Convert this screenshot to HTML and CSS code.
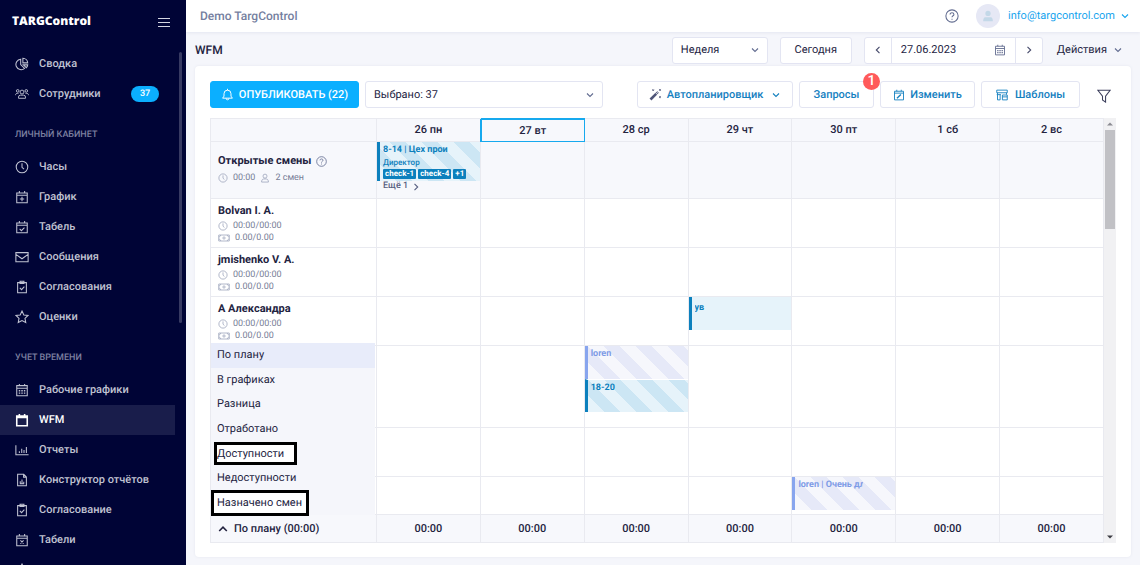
FILE: index.html
```html
<!DOCTYPE html>
<html lang="ru">
<head>
<meta charset="utf-8">
<title>TARGControl – WFM</title>
<link rel="stylesheet" href="styles.css">
</head>
<body>
<svg class="sprite" aria-hidden="true">
  <symbol id="i-pie" viewBox="0 0 16 16"><path d="M6.500 2.500a6 6 0 1 0 4.500 10.500L6.500 8.700z"/><path d="M9 1.500v5.200h5.500A5.600 5.600 0 0 0 9 1.500zM9.500 9h5a5 5 0 0 1-1.500 3.200z"/></symbol>
  <symbol id="i-team" viewBox="0 0 18 16"><circle cx="9" cy="5.500" r="2.500"/><circle cx="3.500" cy="4" r="1.700"/><circle cx="14.500" cy="4" r="1.700"/><path d="M4.500 13.500v-1.500a2.500 2.500 0 0 1 2.500-2.500h4a2.500 2.500 0 0 1 2.500 2.500v1.500zM.7 9.500c0-1.500.8-2.300 2.300-2.300h1.500M17.300 9.500c0-1.500-.8-2.300-2.300-2.300h-1.500"/></symbol>
  <symbol id="i-clock" viewBox="0 0 16 16"><circle cx="8" cy="8" r="6.600"/><path d="M8 3.800V8.300l2.300 2.200"/></symbol>
  <symbol id="i-cal" viewBox="0 0 16 16"><path d="M2 3.500h12v11H2zM2 5h12M5 1v2.500M11 1v2.500"/></symbol>
  <symbol id="i-calplus" viewBox="0 0 16 16"><path d="M2 3.500h12v11H2zM2 6h12M5 1v2.500M11 1v2.500M8 7.800v5M5.500 10.300h5"/></symbol>
  <symbol id="i-calcheck" viewBox="0 0 16 16"><path d="M2 3.500h12v11H2zM2 6h12M5 1v2.500M11 1v2.500M5.300 10.200l2 2 3.500-3.500"/></symbol>
  <symbol id="i-calx" viewBox="0 0 16 16"><path d="M2 3.500h12v11H2zM2 6h12M5 1v2.500M11 1v2.500M6.200 8.500l3.600 3.600M9.800 8.500l-3.600 3.600"/></symbol>
  <symbol id="i-calgrid" viewBox="0 0 16 16"><path d="M2 3h12v11.500H2zM2 6h12M5 1v2M11 1v2"/><path d="M4.300 8.800h7.500M4.300 11.600h7.500" stroke-width="1.600" stroke-dasharray="1.700 1.200"/></symbol>
  <symbol id="i-mail" viewBox="0 0 16 16"><path d="M1 3h14v10.500H1zM1 5l7 5 7-5"/></symbol>
  <symbol id="i-clip" viewBox="0 0 16 16"><path d="M3 3h10v11.500H3zM5.800 1.500h4.400v2.500H5.800zM5.500 9l2 2 3.200-3.500"/></symbol>
  <symbol id="i-star" viewBox="0 0 16 16"><path d="M8 1.200l2.100 4.400 4.800.6-3.500 3.300.9 4.800L8 12l-4.300 2.300.9-4.800L1.100 6.200l4.800-.6z"/></symbol>
  <symbol id="i-chart" viewBox="0 0 16 16"><path d="M1 2.500v11h14.500M5 11.500V9.500M7.700 11.500V6.500M10.300 11.500V8M13 11.500V4.500"/></symbol>
  <symbol id="i-doc" viewBox="0 0 16 16"><path d="M3 1.500h7l3 3v10H3zM9.800 1.500v3.200H13M6 12V9.500M8 12V7.500M10 12v-2M5.500 12.200h5"/></symbol>
  <symbol id="i-bell" viewBox="0 0 16 16"><path d="M2 12.500h12L12.300 10V7a4.300 4.300 0 0 0-8.600 0v3zM8 2.700V1M6.300 12.800a1.700 1.700 0 0 0 3.400 0"/></symbol>
  <symbol id="i-down" viewBox="0 0 10 10"><path d="M2 3.500L5 6.500l3-3"/></symbol>
  <symbol id="i-up" viewBox="0 0 10 10"><path d="M1.200 7L5 3.200 8.800 7"/></symbol>
  <symbol id="i-left" viewBox="0 0 10 10"><path d="M6.500 1.800L3.300 5l3.200 3.200"/></symbol>
  <symbol id="i-right" viewBox="0 0 10 10"><path d="M3.500 1.800L6.700 5 3.500 8.200"/></symbol>
  <symbol id="i-help" viewBox="0 0 16 16"><circle cx="8" cy="8" r="7"/><path d="M5.800 6.300C5.800 3.600 10.200 3.700 10.200 6.200 10.200 7.700 8 7.700 8 9.500M8 11v1.300"/></symbol>
  <symbol id="i-user" viewBox="0 0 16 16"><circle cx="8" cy="5" r="3.200"/><path d="M2.500 14.500c0-3 1.500-5 3.500-5h4c2 0 3.500 2 3.500 5z"/></symbol>
  <symbol id="i-wand" viewBox="0 0 16 16"><path d="M1.800 14.200l7-7" stroke-width="3.200"/><path d="M8.500 7.500l2.700-2.700" stroke-width="2.600"/><path d="M8.700 7.300l2.200-2.200" stroke="#fff" stroke-width=".9"/><path d="M4 1.500l2.200 2.200M6.200 1.500L4 3.700M12.300 1.200l2.400 2.400M14.700 1.200l-2.400 2.400M12.300 10l2.400 2.400M14.700 10l-2.400 2.400" stroke-width=".9"/></symbol>
  <symbol id="i-edit" viewBox="0 0 16 16"><path d="M2 3h12v11.500H2zM2 5.500h12M5 1v2M11 1v2"/><path d="M5.300 12.200L10.500 7.300" stroke-width="1.800"/></symbol>
  <symbol id="i-layout" viewBox="0 0 16 16"><path d="M1 1.500h14v3.500H1zM2 5v2.500M14 5v2.500M1 7.500h5.500M2 7.500v7h3.500v-7M8.500 8H15v6.500H8.500zM8.500 10.500H15"/></symbol>
  <symbol id="i-filter" viewBox="0 0 16 16"><path d="M1 1.500h14L9.800 8.200V15L6.300 12.600V8.200z"/></symbol>
  <symbol id="i-cash" viewBox="0 0 16 10"><path d="M1 1h14v8H1zM3.500 1c0 1.500-1 2.500-2.500 2.500M12.500 1c0 1.500 1 2.500 2.500 2.500M3.500 9c0-1.500-1-2.500-2.500-2.500M12.500 9c0-1.500 1-2.500 2.500-2.500"/><circle cx="8" cy="5" r="1.500"/></symbol>
</svg>

<aside class="sidebar">
  <header class="brand">
    <span class="brand-name">TARGControl</span>
    <button class="burger" aria-label="Меню"><i></i><i></i><i></i></button>
  </header>
  <nav class="nav">
    <a href="#"><svg class="icon"><use href="#i-pie"/></svg>Сводка</a>
    <a href="#"><svg class="icon"><use href="#i-team"/></svg>Сотрудники<span class="count">37</span></a>
    <h2>Личный кабинет</h2>
    <a href="#"><svg class="icon"><use href="#i-clock"/></svg>Часы</a>
    <a href="#"><svg class="icon"><use href="#i-calplus"/></svg>График</a>
    <a href="#"><svg class="icon"><use href="#i-calcheck"/></svg>Табель</a>
    <a href="#"><svg class="icon"><use href="#i-mail"/></svg>Сообщения</a>
    <a href="#"><svg class="icon"><use href="#i-clip"/></svg>Согласования</a>
    <a href="#"><svg class="icon"><use href="#i-star"/></svg>Оценки</a>
    <h2>Учет времени</h2>
    <a href="#"><svg class="icon"><use href="#i-calgrid"/></svg>Рабочие графики</a>
    <a href="#" class="active"><svg class="icon"><use href="#i-cal"/></svg>WFM</a>
    <a href="#"><svg class="icon"><use href="#i-chart"/></svg>Отчеты</a>
    <a href="#"><svg class="icon"><use href="#i-doc"/></svg>Конструктор отчётов</a>
    <a href="#"><svg class="icon"><use href="#i-clip"/></svg>Согласование</a>
    <a href="#"><svg class="icon"><use href="#i-calx"/></svg>Табели</a>
    <a href="#"><svg class="icon"><use href="#i-star"/></svg>Отпуска</a>
  </nav>
  <div class="side-thumb"></div>
</aside>

<div class="page">
  <header class="topbar">
    <span class="company">Demo TargControl</span>
    <button class="plain help" aria-label="Справка"><svg class="icon"><use href="#i-help"/></svg></button>
    <span class="avatar"><svg viewBox="0 0 16 16"><circle cx="8" cy="5" r="3"/><path d="M2.500 14c0-4 1.500-4.500 3-4.500h5c1.500 0 3 .5 3 4.500z"/></svg></span>
    <a class="account" href="#">info@targcontrol.com<svg class="chev"><use href="#i-down"/></svg></a>
  </header>

  <div class="subbar">
    <h1>WFM</h1>
    <div class="select period">
      <select aria-label="Период"><option>Неделя</option></select>
      <svg class="chev"><use href="#i-down"/></svg>
    </div>
    <button class="btn today">Сегодня</button>
    <div class="date-nav">
      <button aria-label="Назад"><svg class="chev"><use href="#i-left"/></svg></button>
      <label class="date"><input type="text" value="27.06.2023" aria-label="Дата"><svg class="icon"><use href="#i-calgrid"/></svg></label>
      <button aria-label="Вперёд"><svg class="chev"><use href="#i-right"/></svg></button>
    </div>
    <button class="plain actions">Действия<svg class="chev"><use href="#i-down"/></svg></button>
  </div>

  <main class="card">
    <div class="toolbar">
      <button class="btn publish"><svg class="icon"><use href="#i-bell"/></svg>ОПУБЛИКОВАТЬ (22)</button>
      <div class="select people">
        <select aria-label="Сотрудники"><option>Выбрано: 37</option></select>
        <svg class="chev"><use href="#i-down"/></svg>
      </div>
      <div class="tools">
        <button class="btn link auto"><svg class="icon dark"><use href="#i-wand"/></svg>Автопланировщик<svg class="chev"><use href="#i-down"/></svg></button>
        <button class="btn link requests">Запросы<span class="alert">1</span></button>
        <button class="btn link edit"><svg class="icon"><use href="#i-edit"/></svg>Изменить</button>
        <button class="btn link templates"><svg class="icon"><use href="#i-layout"/></svg>Шаблоны</button>
      </div>
      <button class="plain filter" aria-label="Фильтр"><svg class="icon"><use href="#i-filter"/></svg></button>
    </div>

    <div class="schedule">
      <table class="grid">
        <colgroup><col class="col-name"><col span="7"></colgroup>
        <thead>
          <tr><th></th><th>26 пн</th><th class="now">27 вт</th><th>28 ср</th><th>29 чт</th><th>30 пт</th><th>1 сб</th><th>2 вс</th></tr>
        </thead>
        <tbody>
          <tr class="open">
            <th>
              <div class="title">Открытые смены<svg class="icon"><use href="#i-help"/></svg></div>
              <div class="meta"><svg class="mini"><use href="#i-clock"/></svg>00:00<svg class="mini person"><use href="#i-user"/></svg>2 смен</div>
            </th>
            <td>
              <div class="shift plan tall">
                <b>8-14 | Цех прои</b>
                <small>Директор</small>
                <div class="tags"><span>check-1</span><span>check-4</span><span>+1</span></div>
              </div>
              <a class="more" href="#">Ещё 1<svg class="chev"><use href="#i-right"/></svg></a>
            </td>
            <td></td><td></td><td></td><td></td><td></td><td></td>
          </tr>
          <tr class="person-row">
            <th><div class="name">Bolvan I. A.</div><div class="meta"><svg class="mini"><use href="#i-clock"/></svg>00:00/00:00</div><div class="meta"><svg class="cash"><use href="#i-cash"/></svg>0.00/0.00</div></th>
            <td></td><td></td><td></td><td></td><td></td><td></td><td></td>
          </tr>
          <tr class="person-row">
            <th><div class="name">jmishenko V. A.</div><div class="meta"><svg class="mini"><use href="#i-clock"/></svg>00:00/00:00</div><div class="meta"><svg class="cash"><use href="#i-cash"/></svg>0.00/0.00</div></th>
            <td></td><td></td><td></td><td></td><td></td><td></td><td></td>
          </tr>
          <tr class="person-row">
            <th><div class="name">А Александра</div><div class="meta"><svg class="mini"><use href="#i-clock"/></svg>00:00/00:00</div><div class="meta"><svg class="cash"><use href="#i-cash"/></svg>0.00/0.00</div></th>
            <td></td><td></td><td></td>
            <td><div class="shift solid"><b>ув</b></div></td>
            <td></td><td></td><td></td>
          </tr>
          <tr class="double">
            <th></th><td></td><td></td>
            <td><div class="shift absent"><b>loren</b></div><div class="shift plan"><b>18-20</b></div></td>
            <td></td><td></td><td></td><td></td>
          </tr>
          <tr class="person-row"><th></th><td></td><td></td><td></td><td></td><td></td><td></td><td></td></tr>
          <tr class="last">
            <th></th><td></td><td></td><td></td><td></td>
            <td><div class="shift absent"><b>loren | Очень дл</b></div></td>
            <td></td><td></td>
          </tr>
        </tbody>
        <tfoot>
          <tr><th><button class="plain total"><svg class="chev"><use href="#i-up"/></svg>По плану (00:00)</button></th><td>00:00</td><td>00:00</td><td>00:00</td><td>00:00</td><td>00:00</td><td>00:00</td><td>00:00</td></tr>
        </tfoot>
      </table>
      <ul class="menu">
        <li class="chosen">По плану</li>
        <li>В графиках</li>
        <li>Разница</li>
        <li>Отработано</li>
        <li><span class="marked">Доступности</span></li>
        <li>Недоступности</li>
        <li><span class="marked wide">Назначено смен</span></li>
      </ul>
      <div class="scroll">
        <svg viewBox="0 0 12 12"><path d="M3 7.500h6L6 4.500z"/></svg>
        <div class="thumb"></div>
        <svg class="end" viewBox="0 0 12 12"><path d="M3 4.500h6L6 7.500z"/></svg>
      </div>
    </div>
  </main>
</div>
</body>
</html>
```

FILE: styles.css
```css
* { box-sizing: border-box; }

body {
  margin: 0;
  height: 100vh;
  display: flex;
  overflow: hidden;
  background: #f5f6fb;
  color: #23233f;
  font: 500 11px/16px Roboto, "Noto Sans", sans-serif;
  text-rendering: geometricPrecision;
}

button, input, select { font: inherit; color: inherit; margin: 0; text-rendering: inherit; }
button { cursor: pointer; }
a { text-decoration: none; color: inherit; }
h1, h2, ul { margin: 0; padding: 0; }

.sprite { position: absolute; width: 0; height: 0; }
.icon, .chev, .mini, .cash { fill: none; stroke: currentColor; stroke-width: 1.200; flex: none; }
.icon { width: 14px; height: 14px; }
.chev { width: 10px; height: 10px; stroke-width: 1.100; }
.mini { width: 10px; height: 10px; }
.cash { width: 12px; height: 8px; stroke-width: 1; }

/* Sidebar */
.sidebar {
  position: relative;
  flex: none;
  width: 186px;
  background: #000436;
  color: #c0c3d2;
  overflow: hidden;
}
.brand {
  display: flex;
  justify-content: space-between;
  align-items: center;
  height: 49px;
  padding: 0 16px 8px 12px;
  color: #fff;
}
.brand-name { font: 800 12px/16px "Open Sans", sans-serif; }
.burger {
  display: flex;
  flex-direction: column;
  gap: 3px;
  padding: 3px 0 0;
  border: 0;
  background: none;
}
.burger i { width: 12px; height: 1px; background: #d4d6e2; }
.nav a {
  display: flex;
  align-items: center;
  gap: 10px;
  height: 30px;
  margin-right: 11px;
  padding-left: 15px;
}
.nav a.active { background: #191d4b; color: #fff; }
.nav a.active .icon { stroke-width: 1.800; }
.nav h2 {
  height: 43px;
  padding: 9px 0 0 15px;
  font: 500 9px/34px Roboto, sans-serif;
  text-transform: uppercase;
  color: #7d80a0;
}
.count {
  margin: 0 16px 0 auto;
  width: 28px;
  border-radius: 8px;
  background: #0bafff;
  color: #fff;
  font-size: 9px;
  text-align: center;
}
.side-thumb {
  position: absolute;
  top: 52px;
  right: 4px;
  width: 3px;
  height: 271px;
  border-radius: 2px;
  background: #373a62;
}

/* Top bar */
.page { flex: 1; min-width: 0; display: flex; flex-direction: column; }
.topbar {
  display: flex;
  align-items: center;
  height: 32px;
  padding: 0 10px 0 14px;
  background: #fff;
  box-shadow: 0 1px 3px #e4e6f0;
}
.company { margin-right: auto; color: #7580a0; font-size: 12px; }
.plain { display: flex; align-items: center; border: 0; padding: 0; background: none; }
.help { color: #626c90; }
.avatar {
  display: grid;
  place-items: center;
  width: 24px;
  height: 24px;
  margin: 0 8px 0 17px;
  border-radius: 50%;
  background: #e6e8f5;
}
.avatar svg { width: 14px; height: 14px; fill: #c3d8e8; }
.account { display: flex; align-items: center; gap: 5px; color: #16a4ee; font-weight: 400; }

/* Period controls */
.subbar {
  display: flex;
  align-items: center;
  height: 34px;
  padding: 2px 17px 0 9px;
}
.subbar h1 { margin-right: auto; font: 500 12px/16px Roboto, sans-serif; }
.btn, .select, .date-nav {
  display: flex;
  align-items: center;
  justify-content: center;
  height: 27px;
  border: 1px solid #e3e5f2;
  border-radius: 3px;
  background: #fff;
}
.select { position: relative; }
.select select {
  appearance: none;
  width: 100%;
  height: 100%;
  padding: 0 24px 0 8px;
  border: 0;
  border-radius: 3px;
  background: none;
  font-weight: 400;
}
.select .chev { position: absolute; right: 7px; color: #626c90; }
.period { width: 96px; margin-right: 12px; }
.today { width: 72px; margin-right: 12px; font-weight: 400; }
.date-nav { width: 179px; margin-right: 14px; align-items: stretch; }
.date-nav button {
  display: grid;
  place-items: center;
  flex: none;
  width: 26px;
  padding: 0;
  border: 0;
  background: none;
  color: #45496a;
}
.date {
  flex: 1;
  display: flex;
  align-items: center;
  min-width: 0;
  padding: 0 9px;
  border: solid #e3e5f2;
  border-width: 0 1px;
}
.date input { flex: 1; min-width: 0; padding: 0; border: 0; background: none; font-weight: 400; }
.date .icon { width: 12px; height: 12px; color: #626c90; }
.actions { gap: 6px; font-weight: 400; }
.actions .chev { color: #626c90; }

/* Card */
.card {
  margin: 0 9px 8px;
  padding: 15px 15px 14px;
  border-radius: 4px;
  background: #fff;
  box-shadow: 0 0 3px #e4e6f0;
}
.toolbar { display: flex; align-items: center; margin-bottom: 10px; }
.publish {
  gap: 5px;
  width: 149px;
  margin-right: 6px;
  border-color: #0bafff;
  background: #0bafff;
  color: #fff;
}
.publish .icon { width: 13px; height: 13px; }
.people { width: 238px; }
.tools { display: flex; gap: 6px; margin-left: auto; }
.link { color: #1480bf; gap: 5px; }
.auto { width: 156px; }
.auto .chev { margin-left: 3px; }
.requests { position: relative; width: 75px; }
.edit { width: 95px; }
.templates { width: 99px; gap: 7px; }
.link .icon { width: 12px; height: 12px; }
.link .dark { width: 13px; height: 13px; color: #4f5578; }
.alert {
  position: absolute;
  top: -9px;
  right: -7px;
  width: 17px;
  height: 17px;
  border-radius: 50%;
  background: #ff5a5a;
  color: #fff;
  font-size: 14px;
  line-height: 17px;
}
.filter { margin: 2px 5px 0 17px; color: #3c3f5c; }

/* Schedule */
.schedule { position: relative; display: flex; }
.grid {
  flex: 1;
  width: 100%;
  table-layout: fixed;
  border-spacing: 0;
  border: solid #e9eaf0;
  border-width: 1px 0 0 1px;
}
.col-name { width: 166px; }
.grid th, .grid td {
  padding: 0;
  border: solid #e9eaf0;
  border-width: 0 1px 1px 0;
  vertical-align: top;
}
.grid tbody th, .grid tfoot th { padding-left: 7px; text-align: left; font-weight: 400; }
.grid thead th { height: 23px; background: #f7f8fc; font-weight: 500; vertical-align: middle; }
.grid thead .now { border: 1px solid #16a9ee; box-shadow: -1px 0 #16a9ee, 0 -1px #16a9ee; }
.open { height: 57px; background: #f7f8fc; }
.person-row { height: 49px; }
.double { height: 82px; }
.last { height: 38px; }
.grid tfoot tr { height: 28px; background: #f7f8fc; }
.grid tfoot td { text-align: center; vertical-align: middle; }
.grid tfoot th { vertical-align: middle; }
.total { gap: 6px; font-weight: 500; }
.total .chev { stroke-width: 1.600; }

.title { display: flex; align-items: center; gap: 5px; padding-top: 11px; font-weight: 700; }
.title .icon { width: 11px; height: 11px; color: #626c90; }
.name { padding-top: 4px; font-weight: 700; }
.meta { display: flex; align-items: center; gap: 5px; font-size: 9px; line-height: 12px; color: #767d96; }
.title + .meta { padding-top: 3px; }
.mini, .cash { color: #98a0b8; }
.name + .meta { padding-top: 1px; }

.shift {
  height: 33px;
  padding: 3px 32px 0 3px;
  border-left: 3px solid #0c80bd;
  color: #0c80bd;
  background-size: 32px 32px;
  background-position: left bottom;
  font-size: 9px;
  line-height: 10px;
}
.shift b { display: block; overflow: hidden; white-space: nowrap; }
.shift + .shift { border-top: 1px solid #fff; }
.plan { background-color: #e6f3fa; background-image: linear-gradient(45deg, transparent 25%, #cce6f4 25% 50%, transparent 50% 75%, #cce6f4 75%); }
.absent { border-color: #88a5ee; color: #7d9be6; background-color: #f6f7fc; background-image: linear-gradient(45deg, transparent 25%, #e6e9f8 25% 50%, transparent 50% 75%, #e6e9f8 75%); }
.solid { background: #e6f3fa; padding-top: 6px; }
.tall { height: 39px; padding-right: 0; }
.shift small { display: block; padding-top: 3px; font-size: 8px; line-height: 10px; }
.tags { display: flex; gap: 2px; padding-top: 1px; }
.tags span { padding: 0 2px; border-radius: 1px; background: #0c80bd; color: #fff; font-size: 8px; font-weight: 700; line-height: 10px; white-space: nowrap; }
.more { display: flex; align-items: center; gap: 3px; padding-left: 6px; font-size: 9px; line-height: 11px; color: #575f80; }

.menu {
  position: absolute;
  left: 1px;
  bottom: 28px;
  display: grid;
  grid-auto-rows: 1fr;
  width: 164px;
  height: 172px;
  background: #f5f6fb;
  list-style: none;
  font-weight: 400;
}
.menu li { display: flex; align-items: center; padding-left: 6px; white-space: nowrap; }
.chosen { background: #e8ecfa; }
.marked { width: 83px; margin: -2px 0 -2px -3px; border: 3px solid #000; background: #fff; line-height: 17px; }
.marked.wide { width: 98px; margin-left: -6px; padding-left: 3px; line-height: 20px; }

.scroll { flex: none; display: flex; flex-direction: column; width: 12px; background: #f1f1f3; }
.scroll svg { width: 12px; height: 12px; fill: #8b8b92; }
.scroll .end { margin-top: auto; fill: #3c3c42; }
.thumb { height: 99px; margin: 0 1px; background: #c1c1c5; }
```
